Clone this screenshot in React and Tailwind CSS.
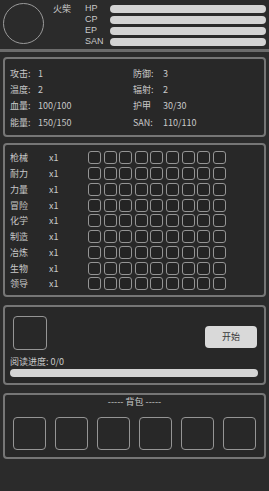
const skills = ['枪械', '耐力', '力量', '冒险', '化学', '制造', '冶炼', '生物', '领导'];
const bars = ['HP', 'CP', 'EP', 'SAN'];
const stats = [
  ['攻击:', '1', '防御:', '3'],
  ['温度:', '2', '辐射:', '2'],
  ['血量:', '100/100', '护甲', '30/30'],
  ['能量:', '150/150', 'SAN:', '110/110'],
];

export default function App() {
  return (
    <div
      className="w-[269px] h-[491px] bg-[#2b2b2b] text-[#c9c9c9] overflow-hidden"
      style={{ fontFamily: '"Noto Sans CJK SC", "Liberation Sans", sans-serif' }}
    >
      {/* 头部 */}
      <div className="h-[52px] flex border-b-[3px] border-[#6c6c6c]">
        <div className="ml-[3px] mt-[3px] w-[41px] h-[41px] rounded-full border-[1.5px] border-[#9a9a9a]" />
        <div className="ml-[9px] mt-[3px] text-[9px] leading-[12px]">火柴</div>
        <div className="ml-[14px] mt-[2px] flex flex-col font-['Liberation_Sans',sans-serif]">
          {bars.map((b) => (
            <div key={b} className="h-[11px] flex items-center text-[9px] leading-[10px]">
              {b}
            </div>
          ))}
        </div>
        <div className="ml-auto mr-[3px] mt-[3px] w-[156px] flex flex-col">
          {bars.map((b) => (
            <div key={b} className="h-[11px] flex items-center">
              <div className="w-full h-[8px] rounded-full bg-[#d4d4d4]" />
            </div>
          ))}
        </div>
      </div>

      {/* 属性 */}
      <div className="mt-[5px] mx-[3px] h-[80px] rounded-[4px] border-2 border-[#767676] bg-[#282828] pt-[6px] pl-[5px]">
        {stats.map((r, i) => (
          <div key={i} className="h-[16.3px] flex items-center text-[9px] leading-none">
            <span className="w-[28px]">{r[0]}</span>
            <span className="w-[95px]">{r[1]}</span>
            <span className="w-[30px]">{r[2]}</span>
            <span>{r[3]}</span>
          </div>
        ))}
      </div>

      {/* 技能 */}
      <div className="mt-[6px] mx-[3px] h-[154px] rounded-[4px] border-2 border-[#767676] bg-[#282828] pt-[5px] pl-[5px]">
        {skills.map((s) => (
          <div key={s} className="h-[15.75px] flex items-center text-[9px] leading-none">
            <span className="w-[39px]">{s}</span>
            <span className="w-[39px]">x1</span>
            <div className="flex gap-[2.6px]">
              {Array.from({ length: 9 }).map((_, j) => (
                <div key={j} className="w-[13px] h-[13px] rounded-[3px] border-[1.5px] border-[#959595] bg-[#242424]" />
              ))}
            </div>
          </div>
        ))}
      </div>

      {/* 阅读 */}
      <div className="mt-[8px] mx-[3px] h-[80px] rounded-[4px] border-2 border-[#767676] bg-[#282828] px-[5px] pt-[9px]">
        <div className="flex items-start">
          <div className="ml-[3px] w-[34px] h-[34px] rounded-[4px] border-[1.5px] border-[#959595]" />
          <button className="ml-auto mt-[10px] mr-[2px] w-[52px] h-[22px] rounded-[4px] bg-[#d9d9d9] text-[#3a3a3a] text-[9px]">
            开始
          </button>
        </div>
        <div className="mt-[6px] text-[9px] leading-[12px]">阅读进度: 0/0</div>
        <div className="mt-[1px] h-[8px] rounded-full bg-[#d4d4d4] mr-[1px]" />
      </div>

      {/* 背包 */}
      <div className="mt-[8px] mx-[3px] h-[66px] rounded-[4px] border-2 border-[#767676] bg-[#282828] pt-[1px]">
        <div className="text-center text-[9px] leading-[12px]">----- 背包 -----</div>
        <div className="mt-[9px] ml-[8px] flex gap-[9px]">
          {Array.from({ length: 6 }).map((_, k) => (
            <div key={k} className="w-[33px] h-[33px] rounded-[4px] border-[1.5px] border-[#959595]" />
          ))}
        </div>
      </div>
    </div>
  );
}
